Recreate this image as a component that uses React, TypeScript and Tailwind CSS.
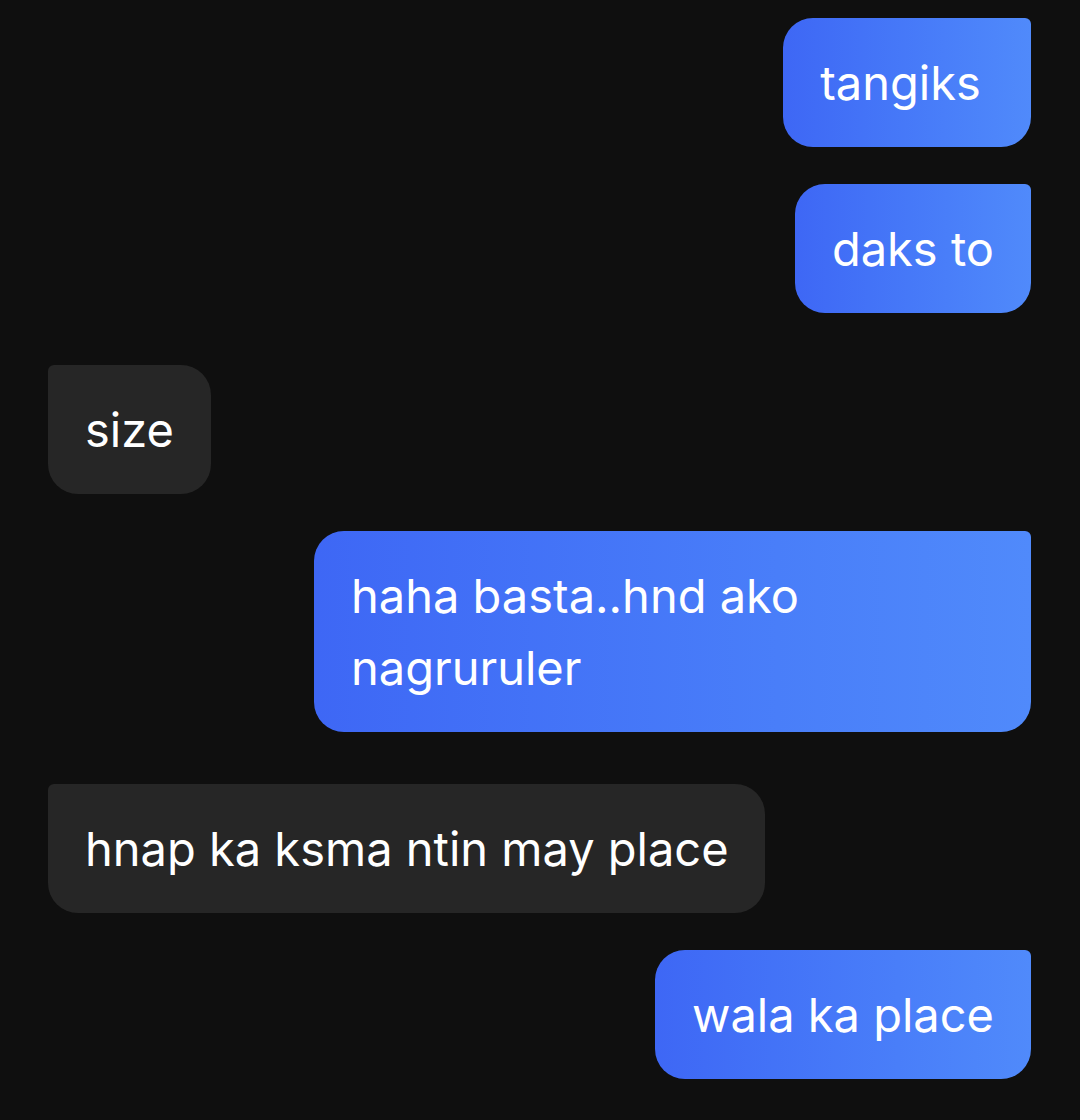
import React from "react"

type Msg = { text: string; mine: boolean; gap: string; nowrap?: boolean }

const messages: Msg[] = [
  { text: "tangiks ", mine: true, gap: "mt-[18px]" },
  { text: "daks to", mine: true, gap: "mt-[37px]" },
  { text: "size", mine: false, gap: "mt-[52px]" },
  { text: "haha basta..hnd ako nagruruler", mine: true, gap: "mt-[37px]" },
  { text: "hnap ka ksma ntin may place", mine: false, gap: "mt-[52px]", nowrap: true },
  { text: "wala ka place", mine: true, gap: "mt-[37px]" },
]

function Bubble({ text, mine, gap, nowrap }: Msg) {
  return (
    <div className={`flex ${mine ? "justify-end" : "justify-start"} ${gap}`}>
      <div
        className={`max-w-[717px] px-[37px] py-[28.5px] text-[47px] leading-[72px] text-white ${
          nowrap ? "whitespace-pre" : "whitespace-pre-wrap"
        } ${
          mine
            ? "rounded-[30px] rounded-tr-[6px] bg-gradient-to-r from-[#3e67f5] to-[#508afb]"
            : "rounded-[30px] rounded-tl-[6px] bg-[#262626]"
        }`}
      >
        {text}
      </div>
    </div>
  )
}

export default function App() {
  return (
    <div
      className="h-[1120px] w-[1080px] overflow-hidden bg-[#0f0f0f] pl-[48px] pr-[49px]"
      style={{ fontFamily: "Inter, 'Noto Sans', sans-serif" }}
    >
      <div className="flex flex-col">
        {messages.map((m, i) => (
          <Bubble key={i} {...m} />
        ))}
      </div>
    </div>
  )
}
